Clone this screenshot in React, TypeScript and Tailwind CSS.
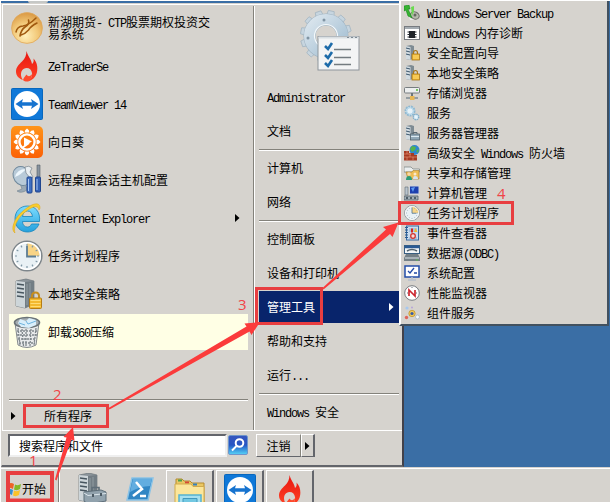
import type { ReactNode } from "react";

// Latin runs are set in a narrower monospace so that two letters take one Han cell
const Label = ({ text }: { text: string }) => (
  <span className="whitespace-pre">
    {text.split(/([\x20-\x7e]+)/).map((part, i) =>
      /^[\x20-\x7e]+$/.test(part) ? (
        <span
          key={i}
          className="font-['Liberation_Mono','Noto_Sans_CJK_SC',monospace] text-[12px] leading-[0] tracking-[-1.2px]"
        >
          {part}
        </span>
      ) : (
        part
      )
    )}
  </span>
);

const Arrow = ({ className = "" }: { className?: string }) => (
  <svg width="5" height="8" viewBox="0 0 5 8" className={className}>
    <path d="M0 0 L4.5 4 L0 8 Z" fill="currentColor" />
  </svg>
);

/* ---------- large icons ---------- */

const GoldIcon = () => (
  <svg width="32" height="32" viewBox="0 0 32 32">
    <defs>
      <radialGradient id="gold" cx="45%" cy="75%" r="75%">
        <stop offset="0" stopColor="#fff0bb" />
        <stop offset="0.55" stopColor="#f2c878" />
        <stop offset="1" stopColor="#d99843" />
      </radialGradient>
    </defs>
    <circle cx="16" cy="16" r="15.4" fill="url(#gold)" stroke="#dfa75a" strokeWidth="0.8" />
    <g fill="none" stroke="#a0590f" strokeLinecap="round">
      <path d="M5 20 Q6 14.500 12 14 Q18 13 25 6" strokeWidth="1.500" />
      <path d="M17.500 8 Q19 12 14 15 Q10 18 9 24" strokeWidth="1.600" />
      <path d="M26 11 Q20 14 17.500 18 Q14 22 10 23" strokeWidth="1.500" />
    </g>
  </svg>
);

const FlameIcon = () => (
  <svg width="32" height="32" viewBox="0 0 32 32">
    <defs>
      <linearGradient id="flame" x1="0" y1="0" x2="0" y2="1">
        <stop offset="0" stopColor="#e8150f" />
        <stop offset="1" stopColor="#ff4427" />
      </linearGradient>
    </defs>
    <path
      d="M15.500 1 C17 7 20 8.500 21 14 C22.500 13 23 11 22.500 8.500 C26 12 27 17 26 22 C25 27 21 31 16 31.500 C20 29.500 21.500 26.500 21 23 C20.500 18.500 16 16.500 12.500 19 C9 21.500 9.500 26.500 12 30 C8 28.500 5 26 5 21.500 C5 17 8 14.500 11 11.500 C14 8.500 15.500 5 15.500 1 Z"
      fill="url(#flame)"
    />
    <path d="M12 30 C13 27 14.500 26 15.500 24.500 C17 27 19.500 26.500 21 24 C21 28 19 31 16 31.500 C14.500 31.500 13 31 12 30 Z" fill="#ff4a2c" />
  </svg>
);

const TeamViewerIcon = () => (
  <svg width="32" height="32" viewBox="0 0 32 32">
    <rect x="0.500" y="0.500" width="31" height="31" rx="1" fill="#0f78d8" stroke="#0867bd" />
    <circle cx="16" cy="16" r="13" fill="#fff" />
    <path d="M4.500 16 L12 11 L11 14.300 H21 L20 11 L27.500 16 L20 21 L21 17.700 H11 L12 21 Z" fill="#1673cf" />
  </svg>
);

const SunflowerIcon = () => (
  <svg width="32" height="32" viewBox="0 0 32 32">
    <defs>
      <linearGradient id="sun" x1="0" y1="0" x2="0" y2="1">
        <stop offset="0" stopColor="#ff9418" />
        <stop offset="1" stopColor="#fb6106" />
      </linearGradient>
    </defs>
    <rect width="32" height="32" rx="5" fill="url(#sun)" />
    {Array.from({ length: 12 }, (_, i) => (
      <path
        key={i}
        d="M13.600 6.500 Q13.500 4 16 2.500 Q18.500 4 18.400 6.500 Z"
        fill="#fff"
        transform={`rotate(${i * 30} 16 16)`}
      />
    ))}
    <circle cx="16" cy="16" r="7.600" fill="none" stroke="#fff" strokeWidth="2.400" />
    <path d="M13 11.500 L21 15.500 L13 20 Z" fill="#fff" />
    <path d="M11 22 L18 17" stroke="#fff" strokeWidth="2" />
  </svg>
);

const RemoteIcon = () => (
  <svg width="32" height="32" viewBox="0 0 32 32">
    <path d="M9 19 L11 25 L6 27 Q10 30 16 26 L14 18 Z" fill="#9aa9b5" stroke="#71818e" strokeWidth="0.600" />
    <ellipse cx="11" cy="12" rx="8.500" ry="10" fill="#b8cad8" stroke="#71899c" transform="rotate(-35 11 12)" />
    <path d="M4 13 Q6 5 15 5 Q11 10 4 13" fill="#edf6fc" />
    <path d="M14 3 Q18 1 21 4 L19 8 L22 13 L20 15 L15 9 Z" fill="#e9eef1" stroke="#77838d" strokeWidth="0.700" />
    <rect x="16" y="13" width="5" height="16" rx="1" fill="#3f6fc1" stroke="#20468f" />
    <path d="M17.500 15 V27" stroke="#a7c7f5" />
    <path d="M26 1 H29 V14 H26 Z" fill="#8994a0" stroke="#505b66" strokeWidth="0.600" />
    <rect x="24.500" y="13" width="5" height="15" rx="1" fill="#3461b5" stroke="#20468f" />
    <path d="M26 15 V26" stroke="#a7c7f5" />
  </svg>
);

const ExplorerIcon = () => (
  <svg width="32" height="32" viewBox="0 0 32 32">
    <defs>
      <linearGradient id="ie" x1="0" y1="0" x2="0" y2="1">
        <stop offset="0" stopColor="#7ddcff" />
        <stop offset="1" stopColor="#24a1dd" />
      </linearGradient>
    </defs>
    <path
      d="M16.500 4 C9 4 4 9.500 4 17 C4 25 9.500 30 16.500 30 C22 30 26 27 28 22 H20.500 C19.500 24 18.500 25 16.500 25 C13.500 25 11.500 23 11.500 19.500 H28.500 C29.500 10 24.500 4 16.500 4 Z M11.500 14.500 C12 11 13.500 9 16.500 9 C19.500 9 21 11 21.500 14.500 Z"
      fill="url(#ie)"
      stroke="#1384bd"
      strokeWidth="0.800"
      fillRule="evenodd"
    />
    <path
      d="M4 31 C-1 28 3 16 12 9 C20 2 28 -1 29 5 C29 6 29 7 28 8 C27 2 20 5 13 11 C6 17 2 26 4 31 Z"
      fill="#f8cd2e"
      stroke="#dca315"
      strokeWidth="0.500"
    />
  </svg>
);

const ClockIcon = ({ size = 32 }: { size?: number }) => (
  <svg width={size} height={size} viewBox="0 0 32 32">
    <circle cx="16" cy="16" r="14.800" fill="#e9f1f5" stroke="#7e868b" strokeWidth="1.600" />
    <circle cx="16" cy="16" r="13.300" fill="none" stroke="#fff" strokeWidth="1.500" />
    <path d="M16 3.500 A12.500 12.500 0 0 1 28.500 16 H16 Z" fill="#f8d486" />
    {Array.from({ length: 12 }, (_, i) => (
      <path key={i} d="M16 4 V6" stroke="#7f97a6" strokeWidth="1.200" transform={`rotate(${i * 30} 16 16)`} />
    ))}
    <path d="M16 6 V16.500 H25" fill="none" stroke="#5c7d94" strokeWidth="1.800" />
  </svg>
);

const Tower = ({ x = 0, y = 0 }: { x?: number; y?: number }) => (
  <g transform={`translate(${x} ${y})`}>
    <path d="M0 2 L10 0 L18 2 V25 L9 29 L0 27 Z" fill="#8b949a" stroke="#606a70" strokeWidth="0.600" />
    <path d="M0 2 L9 3 V29 L0 27 Z" fill="#cdd5d9" />
    <path d="M1 5 L8 6 M1 9 L8 10 M1 13 L8 14 M1 17 L8 18" stroke="#47555f" strokeWidth="1.600" />
    <path d="M9 3 L18 2 V25 L9 29 Z" fill="#727d84" />
    <path d="M11 5 V26 M14 4 V25" stroke="#9aa4aa" strokeWidth="0.800" />
  </g>
);

const LockServerIcon = () => (
  <svg width="32" height="32" viewBox="0 0 32 32">
    <Tower x={5} y={1} />
    <path d="M21 21 V18 Q21 14.500 24.500 14.500 Q28 14.500 28 18 V21" fill="none" stroke="#c58d20" strokeWidth="2" />
    <rect x="18.500" y="20" width="12" height="10.500" rx="1" fill="#f3b92e" stroke="#b57c13" />
    <path d="M19.500 22.500 H29.500 M19.500 25.500 H29.500 M19.500 28.500 H29.500" stroke="#ffdc74" />
  </svg>
);

const TrashIcon = () => (
  <svg width="32" height="32" viewBox="0 0 32 32">
    <path d="M4 7 L7 29 Q16 34 25 29 L28 7 Z" fill="#e8eaeb" stroke="#858a8d" />
    <path
      d="M7 12 L9 29 M11 13 L12.500 30 M15 13 V30 M20 13 L19 30 M25 12 L23 29 M6 15 H26 M6 19 H26 M7 23 H25 M8 27 H24"
      stroke="#7f878c"
      strokeWidth="1.300"
      strokeDasharray="2 1"
    />
    <ellipse cx="16" cy="6.500" rx="12.500" ry="5" fill="#a5adb1" stroke="#6c7478" strokeWidth="1.600" />
    <path d="M7 7 L9 3 L15 5 L18 2 L25 4 L25 9 L18 12 L10 11 Z" fill="#d9eefa" />
    <path d="M15 5 L17 8 L25 5 M8 7 L14 9" stroke="#6fb4df" fill="none" />
  </svg>
);

const GearChecklist = () => (
  <svg width="62" height="64" viewBox="0 0 62 64">
    <defs>
      <linearGradient id="gear" x1="0" y1="0" x2="1" y2="1">
        <stop offset="0" stopColor="#dae5ed" />
        <stop offset="1" stopColor="#a2bed2" />
      </linearGradient>
    </defs>
    {Array.from({ length: 12 }, (_, i) => (
      <path
        key={i}
        d="M22 8 L23 1.500 L29 1.500 L30 8 Z"
        fill="#c7d5df"
        stroke="#a1b3c0"
        strokeWidth="0.700"
        transform={`rotate(${i * 30 + 12} 26 27)`}
      />
    ))}
    <circle cx="26" cy="27" r="16.500" fill="none" stroke="#9fb3c2" strokeWidth="12" />
    <circle cx="26" cy="27" r="16.500" fill="none" stroke="url(#gear)" strokeWidth="11" />
    <circle cx="26" cy="27" r="11.500" fill="none" stroke="#f4f8fa" strokeWidth="1.200" />
    <circle cx="24" cy="11" r="1.500" fill="#8094a3" />
    <circle cx="8" cy="29" r="1.500" fill="#8094a3" />
    <rect x="18" y="27.500" width="41" height="33.500" fill="#f3f4f5" stroke="#8e959b" />
    <path d="M18.500 28.500 H58.500" stroke="#d8dee2" strokeWidth="2" />
    <path d="M47 28.500 H57" stroke="#7e8a94" strokeWidth="1.200" strokeDasharray="2 2" />
    <path d="M25 37 L28 40 L32 34 M25 46 L28 49 L32 43 M25 54 L28 57 L32 51" fill="none" stroke="#1d6ba9" strokeWidth="2.600" />
    <path d="M34 40.500 H51 M34 48.500 H51 M34 55.500 H51" stroke="#737b80" strokeWidth="1.300" />
  </svg>
);

/* ---------- small icons ---------- */

const Small = ({ children }: { children: ReactNode }) => (
  <svg width="16" height="16" viewBox="0 0 16 16">
    {children}
  </svg>
);

const MiniTower = () => (
  <g>
    <path d="M2 1 L7 0 L10 1 V13 L6 15 L2 14 Z" fill="#7e8b93" />
    <path d="M2 1 L6.500 2 V15 L2 14 Z" fill="#d1dbe1" />
    <path d="M2 3 L6 4 M2 6 L6 7 M2 9 L6 10" stroke="#3d566b" />
  </g>
);

const BackupIcon = () => (
  <Small>
    <ellipse cx="11" cy="10.500" rx="4.500" ry="3.500" fill="#b7b9ad" stroke="#6d6f68" transform="rotate(25 11 10)" />
    <circle cx="11" cy="10" r="1.500" fill="#656860" />
    <path d="M0 1 L5 0 L6 4 L4 4 L8 13 L4 11 L2 5 L0 6 Z" fill="#38b332" stroke="#168b1b" strokeWidth="0.600" />
    <path d="M7 2 L10 1 L10 6 L8 11 Z" fill="#6bdb50" />
    <path d="M5 12 L10 15 H6 Z" fill="#ececec" />
  </Small>
);

const MemoryIcon = () => (
  <Small>
    <rect x="0.500" y="1.500" width="15" height="13" fill="#fff" stroke="#777b80" />
    <path d="M1 3 H15" stroke="#a5acb2" strokeWidth="2" />
    <rect x="5" y="6" width="6" height="7" fill="#20252a" />
    <path d="M3.500 7 H12.500 M3.500 9.500 H12.500 M3.500 12 H12.500" stroke="#20252a" />
  </Small>
);

const LockIcon = () => (
  <Small>
    <MiniTower />
    <path d="M9.500 10 V8 Q9.500 5.500 11.500 5.500 Q13.500 5.500 13.500 8 V10" fill="none" stroke="#a87717" strokeWidth="1.200" />
    <rect x="8" y="9" width="7.500" height="6" fill="#f3bd38" stroke="#a87717" strokeWidth="0.800" />
    <path d="M9 11 H15 M9 13 H15" stroke="#ffe28b" strokeWidth="0.700" />
  </Small>
);

const StorageIcon = () => (
  <Small>
    <rect x="0.500" y="2.500" width="15" height="5.500" rx="1" fill="#eceeee" stroke="#777d80" />
    <path d="M12 5 H14" stroke="#51b82f" strokeWidth="1.500" />
    <path d="M8 8 V13" stroke="#6c7579" strokeWidth="2" />
    <path d="M2 13 H14" stroke="#7e8b93" strokeWidth="1.500" />
    <rect x="6" y="11" width="4.500" height="4" fill="#e7b755" />
  </Small>
);

const ServicesIcon = () => (
  <Small>
    <circle cx="6" cy="6" r="4.500" fill="#e7f5fc" stroke="#8fb9d2" strokeWidth="2" strokeDasharray="2 0.700" />
    <circle cx="6" cy="6" r="3.300" fill="#e7f2f8" stroke="#abd0e5" />
    <circle cx="12" cy="12" r="2.700" fill="#e7f5fc" stroke="#82aec9" strokeWidth="1.500" strokeDasharray="1.500 0.600" />
  </Small>
);

const ManagerIcon = () => (
  <Small>
    <MiniTower />
    <path d="M9 9 V7.500 H13 V9" fill="none" stroke="#5a6871" />
    <rect x="6.500" y="9" width="9" height="6" fill="#91a8b7" stroke="#53626b" strokeWidth="0.800" />
    <path d="M7 11.500 H15" stroke="#dce9f0" />
  </Small>
);

const FirewallIcon = () => (
  <Small>
    <circle cx="10.500" cy="5" r="5" fill="#2f86cf" />
    <path d="M8 1 L12 2 L11 5 L8 7 L6 4 Z M12 6 L15 4 L14 8 Z" fill="#54b34b" />
    <path d="M0 6 H5 V8 H10 V10 H13 V15.500 H0 Z" fill="#a63b23" />
    <path d="M0 9 H7 M0 12 H13 M3 6 V9 M6 9 V12 M3 12 V15 M9 12 V15" stroke="#e18f73" strokeWidth="0.700" />
  </Small>
);

const ShareIcon = () => (
  <Small>
    <path d="M0 2 H7 L9 4 H15.500 V7 H0 Z" fill="#eaeeef" stroke="#777e80" strokeWidth="0.700" />
    <path d="M2 7 H8 L9 5.500 H15 V14 H4 Z" fill="#edbd54" stroke="#aa7c22" strokeWidth="0.600" />
    <circle cx="5" cy="9" r="1.700" fill="#f6d7a8" />
    <path d="M2 15 Q2 11 5 11 Q8 11 8 15 Z" fill="#2c9b77" />
    <circle cx="11" cy="9" r="1.500" fill="#fbe8ca" />
    <path d="M9 14 Q9 11 11 11 Q14 11 14 14 Z" fill="#d8e3ee" />
  </Small>
);

const ComputerIcon = () => (
  <Small>
    <rect x="5.500" y="1" width="9.500" height="8" fill="#1c3fae" stroke="#cdd4dc" />
    <path d="M7 3 L11 2 L9 7 Z" fill="#5d9af1" />
    <path d="M1 2 H4 V10 H1 Z" fill="#bac4cc" stroke="#606c76" strokeWidth="0.600" />
    <path d="M0 11 H14 V15 H0 Z" fill="#a1adb5" stroke="#505d67" strokeWidth="0.800" />
    <path d="M2 13 H4 M6 13 H8 M10 13 H12" stroke="#34444f" strokeWidth="1.500" />
  </Small>
);

const EventIcon = () => (
  <Small>
    <rect x="2.500" y="1" width="12" height="14" fill="#c9dcf0" stroke="#386ba2" />
    <path d="M5 4 H13 M5 6 H13 M5 13 H13" stroke="#8bacd0" />
    <path d="M1 2.500 H4 M1 5 H4 M1 7.500 H4 M1 10 H4 M1 12.500 H4" stroke="#285a91" />
    <path d="M8 3.500 V7.500" stroke="#d52622" strokeWidth="2" />
    <circle cx="9" cy="11" r="2.300" fill="#f3dada" stroke="#d5342c" strokeWidth="1.300" />
    <path d="M11.500 3 L13.500 7 H10 Z" fill="#f3b92d" />
  </Small>
);

const OdbcIcon = () => (
  <Small>
    <rect x="0.500" y="0.500" width="15" height="8" fill="#f3f6f8" stroke="#385f82" />
    <path d="M1 2 H15" stroke="#295a94" strokeWidth="2.500" />
    <path d="M3 6 Q8 3 13 6" stroke="#52636d" fill="none" strokeWidth="1.500" />
    <path d="M2 9 H14 L16 13 V16 H0 V13 Z" fill="#748087" />
    <path d="M1 13 H15" stroke="#dce5e9" />
    <path d="M12 15 H14" stroke="#5ac345" />
  </Small>
);

const ConfigIcon = () => (
  <Small>
    <rect x="1" y="1" width="14" height="11" fill="#fff" stroke="#244fa9" strokeWidth="1.500" />
    <path d="M4 6 L6 8 L10 3 M10 8 H13" fill="none" stroke="#234ba6" strokeWidth="1.300" />
    <path d="M8 12 V14 M4 15 H12" stroke="#b5c0cb" strokeWidth="1.500" />
  </Small>
);

const PerfIcon = () => (
  <Small>
    <circle cx="8" cy="8" r="7.300" fill="#fff" stroke="#777c80" />
    <path d="M5 11 V5 L11 11 V5" fill="none" stroke="#cc2730" strokeWidth="1.700" />
    <path d="M3 8 H4 M12 8 H13 M8 2 V3" stroke="#68737a" />
  </Small>
);

const ComponentIcon = () => (
  <Small>
    <circle cx="8" cy="8.500" r="3.200" fill="#f5c956" stroke="#b88e2c" strokeWidth="0.700" />
    <circle cx="8" cy="8.500" r="1.600" fill="#375ca8" />
    <circle cx="3" cy="3" r="1.600" fill="#a7c8ef" />
    <circle cx="8" cy="2.500" r="1" fill="#b6a4d8" />
    <circle cx="2.500" cy="12.500" r="1.700" fill="#df655b" />
    <circle cx="13.500" cy="12" r="2" fill="#f4f7fa" stroke="#9babb9" strokeWidth="0.600" />
  </Small>
);

/* ---------- start menu ---------- */

const programs = [
  { icon: <GoldIcon />, text: "新湖期货- CTP股票期权投资交\n易系统" },
  { icon: <FlameIcon />, text: "ZeTraderSe" },
  { icon: <TeamViewerIcon />, text: "TeamViewer 14" },
  { icon: <SunflowerIcon />, text: "向日葵" },
  { icon: <RemoteIcon />, text: "远程桌面会话主机配置" },
  { icon: <ExplorerIcon />, text: "Internet Explorer", more: true },
  { icon: <ClockIcon />, text: "任务计划程序" },
  { icon: <LockServerIcon />, text: "本地安全策略" },
  { icon: <TrashIcon />, text: "卸载360压缩", active: true },
];

const places = [
  ["Administrator", "文档"],
  ["计算机", "网络"],
  ["控制面板", "设备和打印机", "管理工具", "帮助和支持", "运行..."],
  ["Windows 安全"],
];

const tools = [
  { icon: <BackupIcon />, text: "Windows Server Backup" },
  { icon: <MemoryIcon />, text: "Windows 内存诊断" },
  { icon: <LockIcon />, text: "安全配置向导" },
  { icon: <LockIcon />, text: "本地安全策略" },
  { icon: <StorageIcon />, text: "存储浏览器" },
  { icon: <ServicesIcon />, text: "服务" },
  { icon: <ManagerIcon />, text: "服务器管理器" },
  { icon: <FirewallIcon />, text: "高级安全 Windows 防火墙" },
  { icon: <ShareIcon />, text: "共享和存储管理" },
  { icon: <ComputerIcon />, text: "计算机管理" },
  { icon: <ClockIcon size={16} />, text: "任务计划程序" },
  { icon: <EventIcon />, text: "事件查看器" },
  { icon: <OdbcIcon />, text: "数据源(ODBC)" },
  { icon: <ConfigIcon />, text: "系统配置" },
  { icon: <PerfIcon />, text: "性能监视器" },
  { icon: <ComponentIcon />, text: "组件服务" },
];

const Divider = () => <div className="h-0.5 border-t border-[#84827b] border-b border-b-white" />;

const ProgramList = () => (
  <div className="flex w-[251px] flex-col border-r border-[#84827b] pr-[5px] pl-1.5">
    <ul className="flex flex-col gap-0.5 pt-1">
      {programs.map((p) => (
        <li
          key={p.text}
          className={`flex h-9 items-center pr-2 pl-0.5 ${p.active ? "bg-[#ffffe5]" : ""}`}
        >
          <span className="mr-[5px] shrink-0">{p.icon}</span>
          <span className="flex flex-col leading-3">
            {p.text.split("\n").map((line) => (
              <Label key={line} text={line} />
            ))}
          </span>
          {p.more && <Arrow className="ml-auto" />}
        </li>
      ))}
    </ul>
    <div className="mt-auto">
      <Divider />
      <div className="flex h-[29px] items-center gap-[28px] pl-0.5">
        <Arrow />
        <Label text="所有程序" />
      </div>
    </div>
  </div>
);

const PlaceList = () => (
  <div className="flex grow flex-col border-l border-white pr-[3px] pl-1">
    <div className="flex h-[74px] pt-[3px] pl-[41px]">
      <GearChecklist />
    </div>
    {places.map((group, i) => (
      <div key={i}>
        {i > 0 && (
          <div className="flex h-[3px] flex-col justify-end">
            <Divider />
          </div>
        )}
        {group.map((text) => (
          <div key={text} className="flex h-[34px] items-center py-px">
            <div
              className={`flex h-full grow items-center justify-between pr-[5px] pl-2 ${
                text === "管理工具" ? "bg-[#08246b] text-white" : ""
              }`}
            >
              <Label text={text} />
              {text === "管理工具" && <Arrow />}
            </div>
          </div>
        ))}
      </div>
    ))}
  </div>
);

const StartMenu = () => (
  <div className="flex h-[464px] w-[403px] flex-col border-t border-r-2 border-b-2 border-l border-t-[#d6d3ce] border-r-[#42414a] border-b-[#63656b] border-l-[#d6d3ce] bg-[#d6d3ce]">
    <div className="flex h-[426px] border-t border-l border-white pt-px">
      <ProgramList />
      <PlaceList />
    </div>
    <div className="flex grow items-start border-t border-white pt-[3px] pl-1.5">
      <div className="flex h-[23px] w-[219px] items-center border-2 border-t-[#63656b] border-r-[#efefef] border-b-[#efefef] border-l-[#63656b] bg-white pl-[9px]">
        <Label text="搜索程序和文件" />
      </div>
      <div className="mt-px ml-[1px] flex size-5 items-center justify-center rounded-xs border border-[#6d95cc] bg-linear-to-b from-[#3555bd] via-[#2655c4] to-[#55cdf4]">
        <svg width="16" height="16" viewBox="0 0 16 16" fill="none" stroke="#fff" strokeWidth="2">
          <circle cx="9.500" cy="6" r="3.800" />
          <path d="M6.500 9 L2 13.500" />
        </svg>
      </div>
      <div className="ml-2 flex h-[23px] w-[45px] items-center justify-center border border-t-white border-r-[#84827b] border-b-[#63656b] border-l-white">
        <Label text="注销" />
      </div>
      <div className="flex h-[23px] w-3.5 items-center justify-center border border-r-2 border-t-white border-r-[#63656b] border-b-[#63656b] border-l-white">
        <Arrow />
      </div>
    </div>
  </div>
);

const ToolsMenu = () => (
  <ul className="absolute top-px left-[399px] flex h-[325px] w-[210px] flex-col border-r-2 border-b-2 border-l-2 border-r-[#42515f] border-b-[#42515f] border-l-white bg-[#d6d3ce] pt-0.5">
    {tools.map((t, i) => (
      <li key={i} className="flex h-5 shrink-0 items-center gap-[7px] pl-[3px]">
        {t.icon}
        <Label text={t.text} />
      </li>
    ))}
  </ul>
);

/* ---------- taskbar ---------- */

const WindowsFlag = () => (
  <svg width="15" height="16" viewBox="0 0 15 16">
    <path d="M2 3 Q5 1 8 3 L7 8 Q4 6 1 8 Z" fill="#ee6326" />
    <path d="M9 3.500 Q12 5 15 3 L14 8 Q11 10 8 8.500 Z" fill="#83b927" />
    <path d="M1 9 Q4 7 7 9 L6 14 Q3 12 0 14 Z" fill="#378fd1" />
    <path d="M8 9.500 Q11 11 14 9 L13 14 Q10 16 7 14.500 Z" fill="#fcc328" />
  </svg>
);

const ServerBoxIcon = () => (
  <svg width="32" height="32" viewBox="0 0 32 32">
    <Tower x={3} y={0} />
    <path d="M16 18 V14.500 H23 V18" fill="none" stroke="#5f6e78" strokeWidth="1.600" />
    <path d="M8 19 L25 17 L30 19 V28 L12 31 L8 28 Z" fill="#91a2ad" stroke="#5d6e79" />
    <path d="M8 20 L12 22.500 L30 20.500" fill="none" stroke="#dbe5eb" />
    <path d="M17 21 V24 M25 20 V23" stroke="#4c5b65" strokeWidth="2" />
  </svg>
);

const PowerShellIcon = () => (
  <svg width="28" height="25" viewBox="0 0 28 25">
    <path d="M6 1 H27 L22 23 H1 Z" fill="#3186c4" stroke="#8bc3e6" strokeWidth="1.500" />
    <path d="M7 2 H26 L24 9 Q14 9 4 15 Z" fill="#62ade0" />
    <path d="M10 5 L16 12 L7 19 M14 19 H20" fill="none" stroke="#fff" strokeWidth="2.500" />
  </svg>
);

const FolderIcon = () => (
  <svg width="34" height="32" viewBox="0 0 34 32">
    <path d="M3 8 V5 H9 L11 7 H17 L19 9 H31 V31 H3 Z" fill="#eac763" stroke="#b68b2e" />
    <path d="M5 6.500 H9" stroke="#4da04a" strokeWidth="2" />
    <path d="M12 8.500 H16" stroke="#d64937" strokeWidth="2" />
    <path d="M20 10.500 H24" stroke="#3580bd" strokeWidth="2" />
    <path d="M2 10 H18 L20 12.500 H31 V31 H2 Z" fill="#fbe69b" stroke="#d1aa4b" />
    <path d="M6 31 V21 H28 V31" fill="#a5e0f0" stroke="#55b3d1" strokeWidth="1.500" />
    <path d="M10 31 V24.500 H24 V31" fill="#72c8e2" stroke="#4198bd" />
  </svg>
);

const TaskButton = ({ children }: { children: ReactNode }) => (
  <div className="flex h-8 w-12 justify-center border-t border-r-2 border-l border-t-white border-r-[#63656b] border-l-white pt-[3px]">
    {children}
  </div>
);

const Taskbar = () => (
  <div className="flex h-[35px] items-end overflow-hidden border-t border-[#d6d3ce] bg-[#d6d3ce] pl-1 shadow-[inset_0_1px_0_#fff]">
    <div className="flex h-[31px] w-[47px] items-center gap-px border-r border-[#84827b] pt-1 pl-px">
      <WindowsFlag />
      <Label text="开始" />
    </div>
    <div className="ml-1.5 h-[31px] w-0.5 border-l border-[#84827b] border-r border-r-white" />
    <div className="ml-4 h-[29px] w-8">
      <ServerBoxIcon />
    </div>
    <div className="ml-[18px] h-[25px] w-7">
      <PowerShellIcon />
    </div>
    <div className="ml-3 flex gap-0.5">
      <TaskButton>
        <FolderIcon />
      </TaskButton>
      <TaskButton>
        <TeamViewerIcon />
      </TaskButton>
      <TaskButton>
        <FlameIcon />
      </TaskButton>
    </div>
  </div>
);

/* ---------- walkthrough marks ---------- */

const Marks = () => (
  <svg className="absolute inset-0" width="610" height="502" viewBox="0 0 610 502">
    <g fill="none" stroke="#e83e40" strokeWidth="3">
      <rect x="8" y="473" width="44" height="27.500" strokeWidth="4" />
      <rect x="24.500" y="405.500" width="83" height="21" />
      <rect x="256.500" y="288.500" width="65" height="35" />
      <rect x="399.500" y="202.500" width="113" height="21" />
    </g>
    <g fill="#fb3b3b">
      <path d="M55 479.500 L66.500 437.500 L63.500 437 L73 427 L74.500 441 L71.500 439.500 L56.500 480.500 Z" />
      <path d="M108.500 408 L246.500 326.500 L244.500 323.500 L260 322 L251.500 335 L249.500 331.500 L109.500 409.500 Z" />
      <path d="M322.500 288 L386 229.500 L383 227 L398.500 222.500 L392.500 237 L390 234 L323.500 289.500 Z" />
    </g>
    <g fill="#f04448" className="font-['Open_Sans',sans-serif] text-[15px]">
      <text x="29" y="466">1</text>
      <text x="53" y="400">2</text>
      <text x="238" y="310">3</text>
      <text x="497" y="199">4</text>
    </g>
  </svg>
);

export default function App() {
  return (
    <div className="relative flex h-[502px] w-[610px] flex-col overflow-hidden border-t border-l border-white bg-[#3a6ea5] font-['Noto_Sans_CJK_SC',sans-serif] text-[12px] leading-none text-black">
      <div className="flex h-0.5 shrink-0 pl-[27px]">
        <div className="h-0.5 w-5 rounded-b bg-[#c6c8c6]" />
      </div>
      <StartMenu />
      <Taskbar />
      <div className="absolute -top-px -left-px h-[502px] w-[610px]">
        <ToolsMenu />
        <Marks />
      </div>
    </div>
  );
}
